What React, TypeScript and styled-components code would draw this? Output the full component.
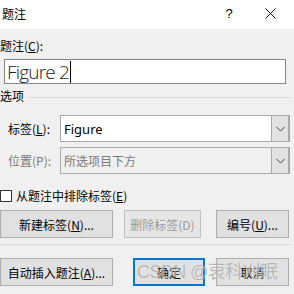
import React from "react";
import styled, { createGlobalStyle } from "styled-components";

const GlobalStyle = createGlobalStyle`
  html, body { margin: 0; padding: 0; background: #f0f0f0; }
  body {
    font-family: "Noto Sans", "Noto Sans CJK SC", sans-serif;
    font-size: 12px;
    color: #000;
  }
`;

const CJK = `"Noto Sans CJK SC", "Noto Sans", sans-serif`;

const Dialog = styled.div`
  position: relative;
  width: 294px;
  height: 294px;
  overflow: hidden;
  background: #f0f0f0;
  font-family: ${CJK};
  font-size: 12px;
`;

const TitleBar = styled.div`
  height: 29px;
  background: #fff;
  display: flex;
  align-items: center;
  padding-left: 2px;
`;

const Title = styled.div`
  flex: 1;
  line-height: 16px;
  margin-top: -2px;
`;

const TitleButton = styled.div<{ $w: number }>`
  width: ${(p) => p.$w}px;
  height: 29px;
  display: flex;
  align-items: center;
  justify-content: center;
  font-family: "Liberation Sans", sans-serif;
  font-size: 13px;
  margin-top: -2px;
`;

const Body = styled.div`
  display: flex;
  flex-direction: column;
  padding-top: 9px;
`;

const Label = styled.div<{ $disabled?: boolean }>`
  line-height: 16px;
  color: ${(p) => (p.$disabled ? "#7a7a7a" : "#000")};
  white-space: nowrap;
`;

const U = styled.span`
  text-decoration: underline;
  text-underline-offset: 1px;
`;

const TextInput = styled.div`
  margin: 5px 0 0 4px;
  width: 282px;
  height: 25px;
  box-sizing: border-box;
  border: 1px solid #858585;
  background: #fff;
  display: flex;
  align-items: center;
  padding-left: 2px;
  font-family: "Open Sans", sans-serif;
  font-weight: 300;
  font-size: 19px;
  letter-spacing: -0.8px;
  color: #222;
`;

const Caret = styled.span`
  display: inline-block;
  width: 1px;
  height: 22px;
  background: #000;
  margin-left: 1px;
`;

const GroupHeader = styled.div`
  margin-top: 4px;
  display: flex;
  align-items: center;
  gap: 4px;
  line-height: 16px;
  width: 290px;
`;

const GroupLine = styled.div`
  flex: 1;
  height: 1px;
  background: #dcdcdc;
  margin-top: 2px;
`;

const FieldRow = styled.div<{ $mt: number }>`
  display: flex;
  align-items: center;
  margin-top: ${(p) => p.$mt}px;
  padding-left: 8px;
`;

const FieldLabel = styled(Label)`
  width: 52px;
`;

const Select = styled.div<{ $disabled?: boolean }>`
  width: 230px;
  height: 27px;
  box-sizing: border-box;
  border: 1px solid #a9a9a9;
  background: ${(p) => (p.$disabled ? "#f0f0f0" : "#fff")};
  display: flex;
  align-items: stretch;
`;

const SelectValue = styled.div<{ $disabled?: boolean }>`
  flex: 1;
  display: flex;
  align-items: center;
  padding-left: 3px;
  color: ${(p) => (p.$disabled ? "#7a7a7a" : "#000")};
  font-size: 12px;
`;

const LatinValue = styled.span`
  font-family: "Noto Sans", sans-serif;
  font-size: 13px;
`;

const DropButton = styled.div`
  width: 16px;
  border-left: 1px solid #a9a9a9;
  border-right: 1px solid #a9a9a9;
  background: #e3e3e3;
  display: flex;
  align-items: center;
  justify-content: center;
`;

const CheckRow = styled.div`
  display: flex;
  align-items: center;
  gap: 4px;
  margin-top: 15px;
  height: 14px;
`;

const CheckBox = styled.div`
  width: 12px;
  height: 12px;
  box-sizing: border-box;
  border: 1px solid #333;
  background: #fff;
`;

const ButtonRow = styled.div<{ $mt: number }>`
  display: flex;
  margin-top: ${(p) => p.$mt}px;
`;

const Button = styled.div<{ $w: number; $ml?: number; $disabled?: boolean; $default?: boolean }>`
  width: ${(p) => p.$w}px;
  margin-left: ${(p) => p.$ml ?? 0}px;
  height: 28px;
  box-sizing: border-box;
  border: ${(p) =>
    p.$default ? "2px solid #0078d7" : p.$disabled ? "1px solid #bfbfbf" : "1px solid #adadad"};
  background: ${(p) => (p.$disabled ? "#e6e6e6" : "#e1e1e1")};
  color: ${(p) => (p.$disabled ? "#9a9a9a" : "#000")};
  display: flex;
  align-items: center;
  justify-content: center;
  white-space: nowrap;
  font-size: 12px;
`;

const Separator = styled.div`
  margin-top: 6px;
  width: 290px;
  height: 1px;
  background: #dadada;
`;

const Watermark = styled.div`
  position: absolute;
  left: 137px;
  top: 262px;
  font-family: "Liberation Sans", "Noto Sans CJK SC", sans-serif;
  font-size: 18px;
  letter-spacing: -0.6px;
  line-height: 20px;
  color: rgba(140, 140, 140, 0.6);
  text-shadow: 0 0 1px rgba(255, 255, 255, 0.7);
  white-space: nowrap;
  pointer-events: none;
`;

const Chevron = () => (
  <svg width="9" height="6" viewBox="0 0 9 6">
    <path d="M0.5 1 L4.5 5 L8.5 1" fill="none" stroke="#3c3c3c" strokeWidth="1" />
  </svg>
);

const CloseIcon = () => (
  <svg width="11" height="11" viewBox="0 0 11 11">
    <path d="M0.5 0.5 L10.5 10.5 M10.5 0.5 L0.5 10.5" stroke="#111" strokeWidth="1" />
  </svg>
);

export default function App() {
  return (
    <>
      <GlobalStyle />
      <Dialog>
        <TitleBar>
          <Title>题注</Title>
          <TitleButton $w={20}>?</TitleButton>
          <TitleButton $w={20} />
          <TitleButton $w={22}>
            <CloseIcon />
          </TitleButton>
          <TitleButton $w={13} />
        </TitleBar>
        <Body>
          <Label>
            题注(<U>C</U>):
          </Label>
          <TextInput>
            Figure 2<Caret />
          </TextInput>
          <GroupHeader>
            <span>选项</span>
            <GroupLine />
          </GroupHeader>
          <FieldRow $mt={11}>
            <FieldLabel>
              标签(<U>L</U>):
            </FieldLabel>
            <Select>
              <SelectValue>
                <LatinValue>Figure</LatinValue>
              </SelectValue>
              <DropButton>
                <Chevron />
              </DropButton>
            </Select>
          </FieldRow>
          <FieldRow $mt={5}>
            <FieldLabel $disabled>位置(P):</FieldLabel>
            <Select $disabled>
              <SelectValue $disabled>所选项目下方</SelectValue>
              <DropButton>
                <Chevron />
              </DropButton>
            </Select>
          </FieldRow>
          <CheckRow>
            <CheckBox />
            <Label>
              从题注中排除标签(<U>E</U>)
            </Label>
          </CheckRow>
          <ButtonRow $mt={7}>
            <Button $w={113}>
              新建标签(<U>N</U>)...
            </Button>
            <Button $w={77} $ml={11} $disabled>
              删除标签(D)
            </Button>
            <Button $w={73} $ml={15}>
              编号(<U>U</U>)...
            </Button>
          </ButtonRow>
          <Separator />
          <ButtonRow $mt={13}>
            <Button $w={113}>
              自动插入题注(<U>A</U>)...
            </Button>
            <Button $w={72} $ml={20} $default>
              确定
            </Button>
            <Button $w={73} $ml={11}>
              取消
            </Button>
          </ButtonRow>
        </Body>
        <Watermark>CSDN @衷科刈眠</Watermark>
      </Dialog>
    </>
  );
}
